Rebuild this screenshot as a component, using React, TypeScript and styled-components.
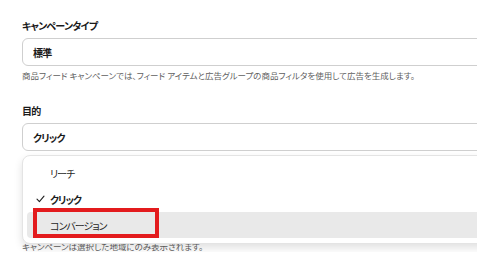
import React from "react";
import styled, { createGlobalStyle } from "styled-components";

const GlobalStyle = createGlobalStyle`
  html, body {
    margin: 0;
    padding: 0;
    background: #ffffff;
    overflow: hidden;
  }
  body {
    font-family: "Noto Sans CJK JP", "Noto Sans", sans-serif;
    font-feature-settings: "palt";
    color: #1f1f1f;
  }
`;

const Page = styled.div`
  width: 540px;
  padding: 19px 0 0 22px;
  display: flex;
  flex-direction: column;
`;

const Field = styled.div`
  display: flex;
  flex-direction: column;
  position: relative;
  & + & {
    margin-top: 23px;
  }
`;

const Label = styled.div`
  font-size: 10px;
  font-weight: 700;
  line-height: 14px;
  letter-spacing: -0.08em;
  margin-bottom: 5px;
  color: #1a1a1a;
`;

const SelectBox = styled.div`
  height: 28px;
  box-sizing: border-box;
  border: 1px solid #cfcfcf;
  border-radius: 6px;
  display: flex;
  align-items: center;
  padding: 0 10px;
  font-size: 10px;
  font-weight: 700;
  letter-spacing: -0.08em;
  color: #1a1a1a;
`;

const Help = styled.div<{ $gap?: number }>`
  font-size: 8.5px;
  line-height: 12px;
  color: #5f5f5f;
  margin-top: ${(p) => p.$gap ?? 3}px;
`;

const Menu = styled.div`
  position: absolute;
  top: calc(100% + 4px);
  left: 0;
  right: 0;
  box-sizing: border-box;
  background: #ffffff;
  border: 1px solid #e4e4e4;
  border-radius: 8px;
  box-shadow: 0 4px 8px rgba(0, 0, 0, 0.12);
  padding: 4px 4px 5px;
  display: flex;
  flex-direction: column;
  z-index: 2;
`;

const Option = styled.div<{ $active?: boolean; $selected?: boolean }>`
  position: relative;
  height: 26px;
  display: flex;
  align-items: center;
  border-radius: 4px;
  background: ${(p) => (p.$active ? "#e9e9e9" : "transparent")};
  font-size: 10px;
  letter-spacing: -0.1em;
  font-weight: ${(p) => (p.$selected ? 700 : 400)};
  color: #1f1f1f;
`;

const Check = styled.span`
  width: 23px;
  box-sizing: border-box;
  padding-left: 9px;
  display: flex;
  align-items: center;
`;

const Highlight = styled.div`
  position: absolute;
  left: 6px;
  top: -4px;
  width: 126px;
  height: 30px;
  box-sizing: border-box;
  border: 4px solid #e31b1d;
  pointer-events: none;
`;

const CheckIcon = () => (
  <svg width="9" height="8" viewBox="0 0 9 8" fill="none">
    <path d="M1 4.2 L3.4 6.6 L8 1.2" stroke="#1f1f1f" strokeWidth="1.1" strokeLinecap="round" strokeLinejoin="round" />
  </svg>
);

export default function App() {
  return (
    <>
      <GlobalStyle />
      <Page>
        <Field>
          <Label>キャンペーンタイプ</Label>
          <SelectBox>標準</SelectBox>
          <Help>商品フィード キャンペーンでは、フィード アイテムと広告グループの商品フィルタを使用して広告を生成します。</Help>
        </Field>
        <Field>
          <Label>目的</Label>
          <SelectBox>クリック</SelectBox>
          <Menu>
            <Option>
              <Check />
              リーチ
            </Option>
            <Option $selected>
              <Check>
                <CheckIcon />
              </Check>
              クリック
            </Option>
            <Option $active>
              <Check />
              コンバージョン
              <Highlight />
            </Option>
          </Menu>
        </Field>
        <Help $gap={89}>キャンペーンは選択した地域にのみ表示されます。</Help>
      </Page>
    </>
  );
}
